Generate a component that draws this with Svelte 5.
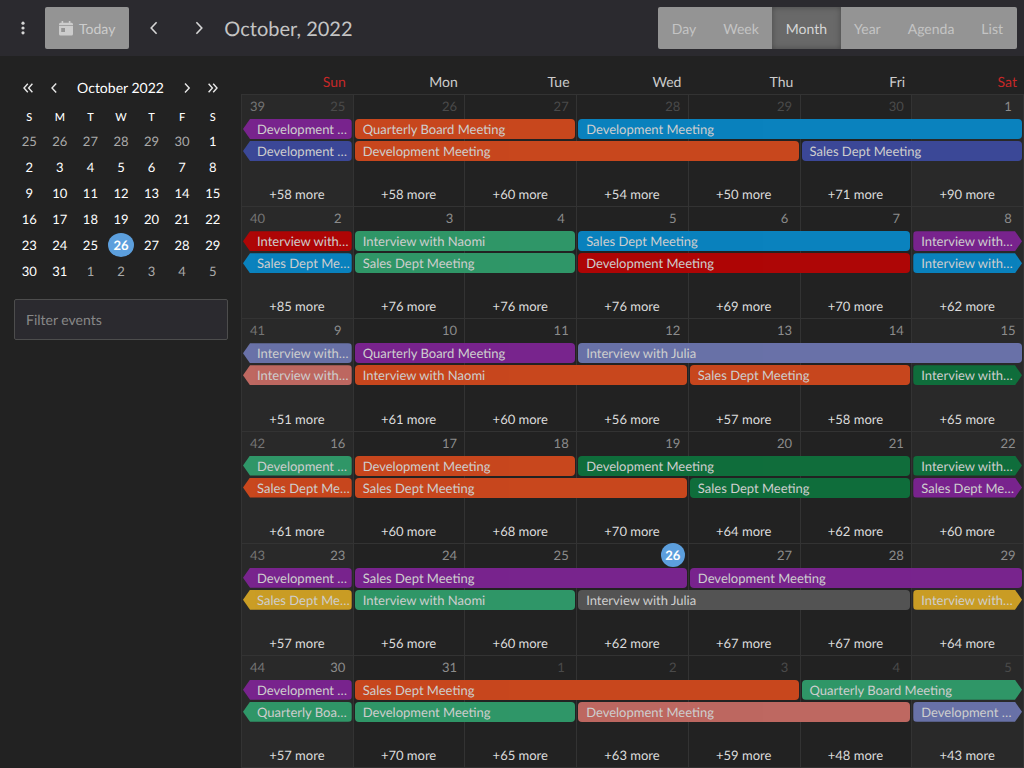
<script>
  const views = ['Day', 'Week', 'Month', 'Year', 'Agenda', 'List'];
  let view = $state('Month');
  let filter = $state('');

  const dayNames = ['Sun', 'Mon', 'Tue', 'Wed', 'Thu', 'Fri', 'Sat'];
  const first = 25;
  // 42 days starting on Sunday, September 25
  const days = Array.from({ length: 42 }, (_, i) => {
    const n = i + first - 30;
    if (n < 1) return { n: n + 30, other: true };
    if (n > 31) return { n: n - 31, other: true };
    return { n, other: false, today: n === 26 };
  });
  const rows = Array.from({ length: 6 }, (_, w) => days.slice(w * 7, w * 7 + 7));

  const D = 'Development Meeting';
  const Q = 'Quarterly Board Meeting';
  const S = 'Sales Dept Meeting';
  const N = 'Interview with Naomi';
  const J = 'Interview with Julia';

  // event: [lane, first column, columns spanned, name, colour, continuation]
  const weeks = [
    { more: [58, 58, 60, 54, 50, 71, 90], events: [
      [1, 1, 1, D, 'purple', 'before'], [1, 2, 2, Q, 'orange'], [1, 4, 4, D, 'blue'],
      [2, 1, 1, D, 'indigo', 'before'], [2, 2, 4, D, 'orange'], [2, 6, 2, S, 'indigo']] },
    { more: [85, 76, 76, 76, 69, 70, 62], events: [
      [1, 1, 1, N, 'red', 'before'], [1, 2, 2, N, 'green'], [1, 4, 3, S, 'blue'], [1, 7, 1, N, 'purple', 'after'],
      [2, 1, 1, S, 'blue', 'before'], [2, 2, 2, S, 'green'], [2, 4, 3, D, 'red'], [2, 7, 1, N, 'blue', 'after']] },
    { more: [51, 61, 60, 56, 57, 58, 65], events: [
      [1, 1, 1, N, 'lavender', 'before'], [1, 2, 2, Q, 'purple'], [1, 4, 4, J, 'lavender'],
      [2, 1, 1, N, 'salmon', 'before'], [2, 2, 3, N, 'orange'], [2, 5, 2, S, 'orange'], [2, 7, 1, N, 'forest', 'after']] },
    { more: [61, 60, 68, 70, 64, 62, 60], events: [
      [1, 1, 1, D, 'green', 'before'], [1, 2, 2, D, 'orange'], [1, 4, 3, D, 'forest'], [1, 7, 1, N, 'forest', 'after'],
      [2, 1, 1, S, 'orange', 'before'], [2, 2, 3, S, 'orange'], [2, 5, 2, S, 'forest'], [2, 7, 1, S, 'purple', 'after']] },
    { more: [57, 56, 60, 62, 67, 67, 64], events: [
      [1, 1, 1, D, 'purple', 'before'], [1, 2, 3, S, 'purple'], [1, 5, 3, D, 'purple'],
      [2, 1, 1, S, 'amber', 'before'], [2, 2, 2, N, 'green'], [2, 4, 3, J, 'grey'], [2, 7, 1, N, 'amber', 'after']] },
    { more: [57, 70, 65, 63, 59, 48, 43], events: [
      [1, 1, 1, D, 'purple', 'before'], [1, 2, 4, S, 'orange'], [1, 6, 2, Q, 'green', 'after'],
      [2, 1, 1, Q, 'green', 'before'], [2, 2, 2, D, 'green'], [2, 4, 3, D, 'salmon'], [2, 7, 1, D, 'lavender', 'after']] }
  ];
</script>

<div class="app">
  <header class="toolbar">
    <button class="icon menu" aria-label="Menu">
      <svg width="16" height="16" viewBox="0 0 16 16" fill="currentColor"><circle cx="8" cy="3.2" r="1.6"/><circle cx="8" cy="8" r="1.6"/><circle cx="8" cy="12.8" r="1.6"/></svg>
    </button>
    <button class="today">
      <svg width="14" height="15" viewBox="0 0 14 15" fill="currentColor"><path d="M2.600 0h1.600v1.800h5.600V0h1.600v1.800h1.100A1.500 1.500 0 0 1 14 3.300V4.200H0v-.9a1.500 1.500 0 0 1 1.500-1.500h1.100zM0 5h14v8a1.500 1.500 0 0 1-1.500 1.500h-11A1.500 1.500 0 0 1 0 13zm2.200 2.100v3.800H6V7.100z" fill-rule="evenodd"/></svg>
      Today
    </button>
    <button class="icon prev" aria-label="Previous month">
      <svg width="16" height="16" viewBox="0 0 16 16"><path d="M10.600 2.300 5.200 8l5.400 5.700"/></svg>
    </button>
    <button class="icon next" aria-label="Next month">
      <svg width="16" height="16" viewBox="0 0 16 16"><path d="M5.400 2.300 10.800 8l-5.400 5.700"/></svg>
    </button>
    <h1>October, 2022</h1>
    <div class="views">
      {#each views as v}
        <button class:active={view === v} aria-pressed={view === v} onclick={() => (view = v)}>{v}</button>
      {/each}
    </div>
  </header>

  <div class="body">
    <aside>
      <div class="mini-head">
        <button class="icon" aria-label="Previous year"><svg width="12" height="12" viewBox="0 0 12 12"><path d="M5.800 1.700 2 6l3.800 4.300M10.400 1.700 6.600 6l3.800 4.300"/></svg></button>
        <button class="icon" aria-label="Previous month"><svg width="12" height="12" viewBox="0 0 12 12"><path d="M8.200 1.500 4 6l4.200 4.500"/></svg></button>
        <span>October 2022</span>
        <button class="icon" aria-label="Next month"><svg width="12" height="12" viewBox="0 0 12 12"><path d="M4 1.500 8.200 6 4 10.500"/></svg></button>
        <button class="icon" aria-label="Next year"><svg width="12" height="12" viewBox="0 0 12 12"><path d="M1.600 1.700 5.400 6 1.600 10.300M6.200 1.700 10 6l-3.800 4.300"/></svg></button>
      </div>
      <table>
        <thead><tr>{#each dayNames as d}<th scope="col">{d[0]}</th>{/each}</tr></thead>
        <tbody>
          {#each rows as row}
            <tr>{#each row as d}<td class:other={d.other}><span class:now={d.today}>{d.n}</span></td>{/each}</tr>
          {/each}
        </tbody>
      </table>
      <input type="text" placeholder="Filter events" aria-label="Filter events" bind:value={filter} />
    </aside>

    <main>
      <div class="names">
        {#each dayNames as d, i}<span class:weekend={i % 6 === 0}>{d}</span>{/each}
      </div>
      {#each weeks as week, w}
        <section class="week">
          {#each rows[w] as d, i}
            <div class="cell" class:shade={i % 6 === 0} class:other={d.other} style:grid-column={i + 1}>
              <div class="cell-head">
                {#if i === 0}<span class="number">{39 + w}</span>{/if}
                <span class="date" class:now={d.today}>{d.n}</span>
              </div>
              <button class="more">+{week.more[i]} more</button>
            </div>
          {/each}
          {#each week.events as [lane, col, span, name, colour, edge]}
            <button class="event {colour} {edge ?? ''}" style:grid-row={lane + 1} style:grid-column="{col} / span {span}">{name}</button>
          {/each}
        </section>
      {/each}
    </main>
  </div>
</div>

<style>
  :global(body) { margin: 0; background: #222; }
  .app {
    min-height: 100vh;
    display: flex;
    flex-direction: column;
    background: #222;
    color: #d6d6d6;
    font: 14px/20px Lato, sans-serif;
    text-rendering: geometricPrecision;
  }
  button, input { font: inherit; color: inherit; box-sizing: border-box; text-rendering: inherit; }
  button { border: 0; padding: 0; background: none; cursor: pointer; }

  .toolbar {
    height: 56px;
    display: flex;
    align-items: center;
    padding: 0 7px 0 8px;
    background: #2b2a2f;
  }
  .icon { display: grid; place-items: center; }
  .icon path { fill: none; stroke: currentColor; stroke-width: 1.6; }
  .menu { width: 30px; height: 42px; margin-right: 7px; }
  .today {
    display: flex;
    align-items: center;
    gap: 6px;
    height: 42px;
    padding: 1px 14px 0;
    border-radius: 2px;
    background: #949494;
    color: #ccc;
  }
  .prev, .next { width: 45px; height: 42px; }
  .prev { margin-left: 2px; }
  h1 { margin: 0 0 0 3px; padding-top: 1px; font-size: 20px; line-height: 28px; font-weight: 400; color: #c4c4c4; }
  .views { display: flex; margin-left: auto; border-radius: 2px; overflow: hidden; background: #949494; color: #c4c4c4; }
  .views button { height: 42px; padding: 1px 14px 0; }
  .views button + button { margin-left: -1px; }
  .views .active { background: #696969; color: #d6d6d6; box-shadow: inset 0 0 6px #4a4a4a; }

  .body { flex: 1; display: flex; }
  aside { flex: none; width: 241px; box-sizing: border-box; padding: 19px 13px 0 14px; color: #fff; }
  .mini-head { display: flex; align-items: center; height: 26px; }
  .mini-head .icon { width: 26px; height: 26px; color: #e8e8e8; }
  .mini-head .icon path { stroke-width: 1.4; }
  .mini-head .icon:first-child { margin-left: 1px; }
  .mini-head .icon:last-child { margin-right: 2px; }
  .mini-head span { flex: 1; text-align: center; }
  table { width: 100%; margin-top: 7px; border-collapse: collapse; table-layout: fixed; font-size: 13px; }
  th, td { height: 26px; padding: 0; text-align: center; font-weight: 400; }
  th { height: 20px; font-size: 11px; font-weight: 500; }
  td span { display: block; width: 26px; line-height: 24px; margin: 0 auto; }
  td.other { color: #aaa; }
  .now { border-radius: 50%; background: #5c9fdd; color: #fff; font-weight: 700; }
  input {
    width: 100%;
    height: 41px;
    margin-top: 15px;
    padding: 0 11px;
    border: 1px solid #4d4d4d;
    border-radius: 2px;
    background: #2b2a2f;
    outline: 0;
  }
  input::placeholder { color: #888; opacity: 1; }

  main { flex: 1; min-width: 0; display: flex; flex-direction: column; border-bottom: 1px solid #333; }
  .names { display: grid; grid-template-columns: repeat(7, 1fr); height: 38px; color: #ccc; }
  .names span { padding: 16px 7px 0 0; text-align: right; }
  .names .weekend { color: #c62828; }
  .week {
    flex: 1;
    display: grid;
    grid-template-columns: repeat(7, minmax(0, 1fr));
    grid-template-rows: 23px 20px 20px 1fr;
    row-gap: 2px;
    min-height: 112px;
    border-right: 1px solid #333;
  }
  .cell {
    grid-row: 1 / -1;
    display: flex;
    flex-direction: column;
    justify-content: space-between;
    box-shadow: inset 1px 1px 0 #333;
  }
  .shade { background: #292929; }
  .cell-head { display: flex; padding: 0 3px 0 9px; line-height: 24px; font-size: 13px; color: #8c8c8c; }
  .number { color: #757575; }
  .date { width: 24px; margin-left: auto; text-align: center; }
  .cell.other .date { color: #4a4a4a; }
  .now.date { color: #fff; }
  .more { align-self: center; margin-bottom: 2px; font-size: 13px; color: #dcdcdc; }
  .event {
    min-width: 0;
    margin: 0 1px 0 2px;
    padding: 0 4px 0 8px;
    border-radius: 4px;
    overflow: hidden;
    white-space: nowrap;
    text-overflow: ellipsis;
    text-align: left;
    font-size: 13px;
    line-height: 20px;
    color: #d4d4d4;
    opacity: 0.97;
  }
  .before { padding: 0 1px 0 14px; clip-path: polygon(0 50%, 7px 0, 100% 0, 100% 100%, 7px 100%); }
  .after { padding-right: 7px; clip-path: polygon(0 0, calc(100% - 7px) 0, 100% 50%, calc(100% - 7px) 100%, 0 100%); }
  .purple { background: #7b2491; }
  .orange { background: #cd481d; }
  .blue { background: #0985c3; }
  .indigo { background: #3c499b; }
  .red { background: #b30505; }
  .green { background: #309a6a; }
  .forest { background: #0f703c; }
  .lavender { background: #6b74ac; }
  .salmon { background: #c36a63; }
  .amber { background: #cfa125; }
  .grey { background: #555; }
</style>
